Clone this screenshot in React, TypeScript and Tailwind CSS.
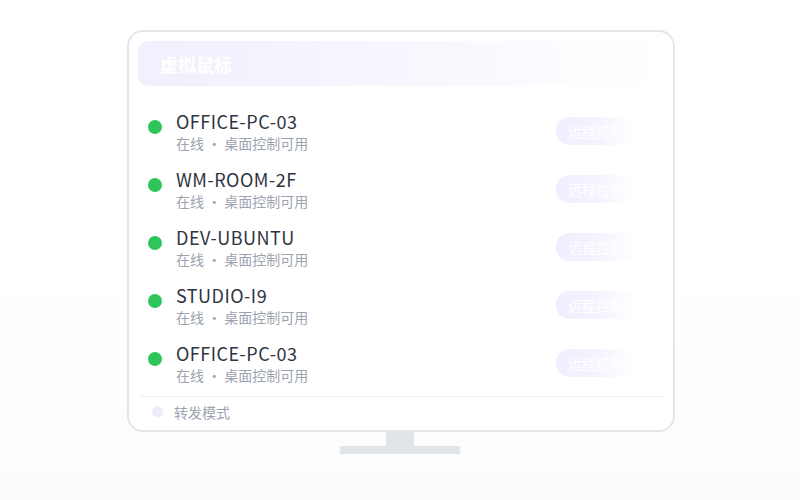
import * as React from 'react';

const devices = ['OFFICE-PC-03', 'WM-ROOM-2F', 'DEV-UBUNTU', 'STUDIO-I9', 'OFFICE-PC-03'];

export default function App() {
    return (
        <div
            className="w-[800px] h-[500px] overflow-hidden bg-gradient-to-b from-white via-white to-[#fcfcfc] pt-[30px]"
            style={{ fontFamily: '"Noto Sans CJK SC", "Noto Sans", sans-serif' }}
        >
            {/* Screen */}
            <div className="ml-[127px] w-[548px] h-[402px] rounded-[16px] border-2 border-[#e3e6ea] bg-white p-[9px] flex flex-col">
                <div className="h-[45px] shrink-0 rounded-[10px] bg-gradient-to-r from-[#f2effe] via-[#f8f6fe] to-white flex items-center pl-[22px]">
                    <span className="text-[18px] font-bold text-white leading-none">虚拟鼠标</span>
                </div>

                <div className="mt-[17px] flex flex-col">
                    {devices.map((name, i) => (
                        <div key={i} className="h-[58px] flex items-start justify-between pl-[10px] pr-[28px]">
                            <div className="flex items-start gap-[14px]">
                                <div className="mt-[17px] w-[14px] h-[14px] rounded-full bg-[#2ec55b]" />
                                <div className="pt-[6px] flex flex-col">
                                    <span className="text-[18px] leading-[24px] text-[#2f3440] tracking-[0.5px]">{name}</span>
                                    <span className="text-[14px] leading-[20px] text-[#9ca3af]">在线 · 桌面控制可用</span>
                                </div>
                            </div>
                            <button className="mt-[14px] h-[28px] w-[80px] rounded-full bg-gradient-to-r from-[#f0edfe] via-[#f5f3fe] to-white pl-[12px] text-left text-[14px] leading-none text-white">
                                远程控制
                            </button>
                        </div>
                    ))}
                </div>

                <div className="mt-[3px] mx-[2px] border-t border-[#eef0f3] flex items-center gap-[11px] pl-[12px] h-[34px] pt-[5px]">
                    <div className="w-[11px] h-[11px] rounded-full bg-[#efebfd]" />
                    <span className="text-[14px] text-[#9ca3af] leading-none">转发模式</span>
                </div>
            </div>

            {/* Stand */}
            <div className="flex flex-col items-center">
                <div className="w-[28px] h-[14px] bg-[#e1e5e9]" />
                <div className="w-[120px] h-[8px] bg-[#e1e5e9]" />
            </div>
        </div>
    );
}
